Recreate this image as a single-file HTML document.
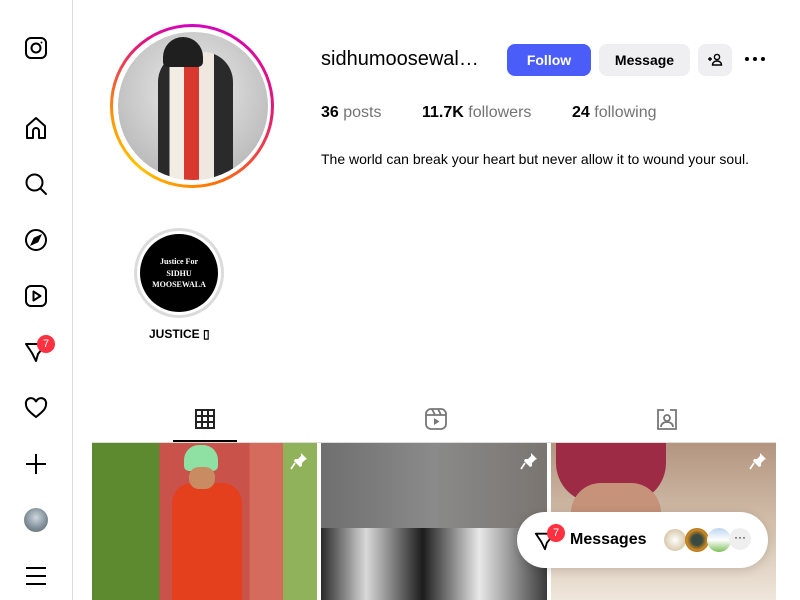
<!DOCTYPE html>
<html><head><meta charset="utf-8"><style>
*{margin:0;padding:0;box-sizing:border-box}
body{width:800px;height:600px;overflow:hidden;background:#fff;font-family:"Liberation Sans",sans-serif;color:#000;position:relative}
.side{position:absolute;left:0;top:0;width:73px;height:600px;border-right:1px solid #dbdbdb}
.ic{position:absolute;left:24px;width:24px;height:24px}
.abs{position:absolute}
.btn{position:absolute;top:44px;height:32px;border-radius:8px;font-weight:bold;font-size:14px;display:flex;align-items:center;justify-content:center}
.stat{position:absolute;top:104px;font-size:16px;color:#737373}
.stat b{color:#000}
.tile{position:absolute;top:443px;height:157px;overflow:hidden}
</style></head><body>
<div class="side">
<svg class="ic" style="top:36px" viewBox="0 0 24 24" fill="none" stroke="#000" stroke-width="2"><rect x="2" y="2" width="20" height="20" rx="5"/><circle cx="12" cy="12" r="4.5"/><circle cx="17.5" cy="6.5" r="1" fill="#000" stroke="none"/></svg>
<svg class="ic" style="top:116px" viewBox="0 0 24 24" fill="none" stroke="#000" stroke-width="2" stroke-linejoin="round"><path d="M3 22V10L12 2l9 8v12h-6v-7a3 3 0 0 0-6 0v7z"/></svg>
<svg class="ic" style="top:172px" viewBox="0 0 24 24" fill="none" stroke="#000" stroke-width="2" stroke-linecap="round"><circle cx="10.5" cy="10.5" r="8"/><path d="M16.5 16.5L22 22"/></svg>
<svg class="ic" style="top:228px" viewBox="0 0 24 24" fill="none" stroke="#000" stroke-width="2"><circle cx="12" cy="12" r="10"/><path d="M16 8l-2.5 5.5L8 16l2.5-5.5z" fill="#000"/></svg>
<svg class="ic" style="top:284px" viewBox="0 0 24 24" fill="none" stroke="#000" stroke-width="2"><rect x="2" y="2" width="20" height="20" rx="5"/><path d="M9.5 7.5v9l7-4.5z" stroke-linejoin="round"/></svg>
<svg class="ic" style="top:340px" viewBox="0 0 24 24" fill="none" stroke="#000" stroke-width="2" stroke-linejoin="round"><path d="M2 4l20 0-8 10-2 7-4-8z"/></svg>
<div class="abs" style="left:37px;top:335px;width:18px;height:18px;border-radius:9px;background:#ff3040;color:#fff;font-size:11px;text-align:center;line-height:18px">7</div>
<svg class="ic" style="top:396px" viewBox="0 0 24 24" fill="none" stroke="#000" stroke-width="2"><path d="M12 21C5 15.5 2 12.5 2 8.5A5 5 0 0 1 12 6a5 5 0 0 1 10 2.5c0 4-3 7-10 12.5z"/></svg>
<svg class="ic" style="top:452px" viewBox="0 0 24 24" fill="none" stroke="#000" stroke-width="2"><path d="M12 2v20M2 12h20"/></svg>
<div class="abs" style="left:24px;top:508px;width:24px;height:24px;border-radius:12px;background:radial-gradient(circle at 50% 40%,#cfd8e0,#7b8a95 60%,#5f6a5e)"></div>
<svg class="ic" style="top:564px" viewBox="0 0 24 24" fill="none" stroke="#000" stroke-width="2"><path d="M2 4h20M2 12h20M2 20h20"/></svg>
</div>

<div class="abs" style="left:110px;top:24px;width:164px;height:164px;border-radius:50%;background:conic-gradient(from 0deg,#d300c5,#e0187a 90deg,#ff7a00 170deg,#ffc300 220deg,#ff9a00 260deg,#e0187a 320deg,#d300c5)"></div>
<div class="abs" style="left:113px;top:27px;width:158px;height:158px;border-radius:50%;background:#fff"></div>
<div class="abs" style="left:118px;top:32px;width:150px;height:148px;border-radius:50%;overflow:hidden;background:radial-gradient(circle at 50% 40%,#ededed,#b8b8b8 80%)">
<div class="abs" style="left:40px;top:20px;width:75px;height:140px;background:linear-gradient(90deg,#2a2a2a 0 15%,#f1ece4 15% 35%,#d8382e 35% 55%,#efe8e0 55% 75%,#2a2a2a 75%);border-radius:30px 30px 0 0"></div>
<div class="abs" style="left:45px;top:5px;width:40px;height:30px;background:#1f1f1f;border-radius:20px 20px 5px 5px"></div>
</div>

<div class="abs" style="left:321px;top:48px;font-size:20px">sidhumoosewal…</div>
<div class="btn" style="left:507px;width:84px;background:#4a5df9;color:#fff">Follow</div>
<div class="btn" style="left:599px;width:91px;background:#efeff2;color:#000">Message</div>
<div class="btn" style="left:698px;width:34px;background:#efeff2"><svg width="16" height="16" viewBox="0 0 16 16" fill="none" stroke="#000" stroke-width="1.4"><circle cx="10" cy="5" r="2.6"/><path d="M5.5 13c0-2.5 2-4 4.5-4s4.5 1.5 4.5 4z"/><path d="M1 7h4M3 5v4"/></svg></div>
<div class="abs" style="left:745px;top:57px;width:4px;height:4px;border-radius:2px;background:#000;box-shadow:8px 0 #000,16px 0 #000"></div>

<div class="stat" style="left:321px"><b>36</b> posts</div>
<div class="stat" style="left:422px"><b>11.7K</b> followers</div>
<div class="stat" style="left:572px"><b>24</b> following</div>
<div class="abs" style="left:321px;top:151px;font-size:14px;color:#000">The world can break your heart but never allow it to wound your soul.</div>

<div class="abs" style="left:134px;top:228px;width:90px;height:90px;border-radius:50%;background:#dbdbdb"></div>
<div class="abs" style="left:137px;top:231px;width:84px;height:84px;border-radius:50%;background:#fff"></div>
<div class="abs" style="left:140px;top:234px;width:78px;height:78px;border-radius:50%;background:#000;color:#fff;font-family:'Liberation Serif',serif;font-weight:bold;font-size:8px;text-align:center;padding-top:22px;line-height:11.5px">Justice For<br>SIDHU<br>MOOSEWALA</div>
<div class="abs" style="left:149px;top:327px;font-size:12px;font-weight:bold">JUSTICE ▯</div>

<div class="abs" style="left:92px;top:442px;width:684px;height:1px;background:#dbdbdb"></div>
<div class="abs" style="left:173px;top:440px;width:64px;height:2px;background:#000"></div>
<svg class="abs" style="left:195px;top:408px" width="20" height="22" viewBox="0 0 20 22" fill="none" stroke="#222" stroke-width="2"><rect x="1" y="2" width="18" height="18"/><path d="M7 2v18M13 2v18M1 8h18M1 14h18"/></svg>
<svg class="abs" style="left:425px;top:408px" width="22" height="22" viewBox="0 0 22 22" fill="none" stroke="#777" stroke-width="1.8"><rect x="1" y="1" width="20" height="20" rx="5"/><path d="M1 7h20M7 1l3 6M13 1l3 6"/><path d="M9 10v7l5.5-3.5z" fill="#777" stroke="none"/></svg>
<svg class="abs" style="left:656px;top:408px" width="22" height="22" viewBox="0 0 22 22" fill="none" stroke="#777" stroke-width="1.8"><path d="M8 2H2v19h18V2h-6"/><circle cx="11" cy="10" r="3"/><path d="M5 19c0-3 2.5-5 6-5s6 2 6 5"/></svg>

<div class="tile" style="left:92px;width:225px;background:linear-gradient(90deg,#5d8a2f 0 30%,#c9524a 30% 70%,#d46b5c 70% 85%,#8fb25a 85%)">
<div class="abs" style="left:80px;top:40px;width:70px;height:120px;background:#e4401d;border-radius:20px 20px 0 0"></div>
<div class="abs" style="left:92px;top:2px;width:34px;height:26px;background:#8fe0a3;border-radius:15px 15px 5px 5px"></div>
<div class="abs" style="left:97px;top:24px;width:26px;height:22px;background:#c98b62;border-radius:10px"></div>
</div>
<div class="tile" style="left:321px;width:226px;background:linear-gradient(90deg,#6f6f6f,#8a8a8a 50%,#7a7570)">
<div class="abs" style="left:0;top:85px;width:226px;height:80px;background:linear-gradient(90deg,#2a2a2a,#d9d9d9 20%,#1c1c1c 45%,#e8e8e8 70%,#3a3a3a)"></div>
</div>
<div class="tile" style="left:551px;width:225px;background:linear-gradient(180deg,#b39580,#d8c6b2 60%,#efe6dc)">
<div class="abs" style="left:5px;top:0;width:110px;height:60px;background:#9d2b45;border-radius:0 0 40px 40px"></div>
<div class="abs" style="left:20px;top:40px;width:90px;height:60px;background:#c69279;border-radius:30px"></div>
</div>
<svg class="abs" style="left:290px;top:452px" width="18" height="18" viewBox="0 0 18 18" fill="#fff"><path d="M11 1l6 6-2 1-3 3 0 3-2 1-6-6 1-2 3 0 3-3z"/><path d="M5 11l-4 6" stroke="#fff" stroke-width="1.6"/></svg>
<svg class="abs" style="left:520px;top:452px" width="18" height="18" viewBox="0 0 18 18" fill="#fff"><path d="M11 1l6 6-2 1-3 3 0 3-2 1-6-6 1-2 3 0 3-3z"/><path d="M5 11l-4 6" stroke="#fff" stroke-width="1.6"/></svg>
<svg class="abs" style="left:749px;top:452px" width="18" height="18" viewBox="0 0 18 18" fill="#fff"><path d="M11 1l6 6-2 1-3 3 0 3-2 1-6-6 1-2 3 0 3-3z"/><path d="M5 11l-4 6" stroke="#fff" stroke-width="1.6"/></svg>

<div class="abs" style="left:517px;top:512px;width:251px;height:56px;border-radius:28px;background:#fff;box-shadow:0 2px 10px rgba(0,0,0,.15)"></div>
<svg class="abs" style="left:534px;top:530px" width="22" height="22" viewBox="0 0 24 24" fill="none" stroke="#000" stroke-width="2" stroke-linejoin="round"><path d="M2 4l20 0-8 10-2 7-4-8z"/></svg>
<div class="abs" style="left:547px;top:524px;width:18px;height:18px;border-radius:9px;background:#ff3040;color:#fff;font-size:11px;text-align:center;line-height:18px">7</div>
<div class="abs" style="left:570px;top:531px;font-size:16px;font-weight:bold">Messages</div>
<div class="abs" style="left:663px;top:528px;width:24px;height:24px;border-radius:12px;background:radial-gradient(#fff,#c8b58a);border:1px solid #fff"></div>
<div class="abs" style="left:685px;top:528px;width:24px;height:24px;border-radius:12px;background:radial-gradient(#3a4a40 30%,#d08a20 60%,#5a3210)"></div>
<div class="abs" style="left:707px;top:528px;width:24px;height:24px;border-radius:12px;background:linear-gradient(#bcd6ee,#fff 50%,#7fbf5a)"></div>
<div class="abs" style="left:729px;top:528px;width:22px;height:22px;border-radius:11px;background:#efefef;font-size:12px;text-align:center;line-height:18px">···</div>
</body></html>
